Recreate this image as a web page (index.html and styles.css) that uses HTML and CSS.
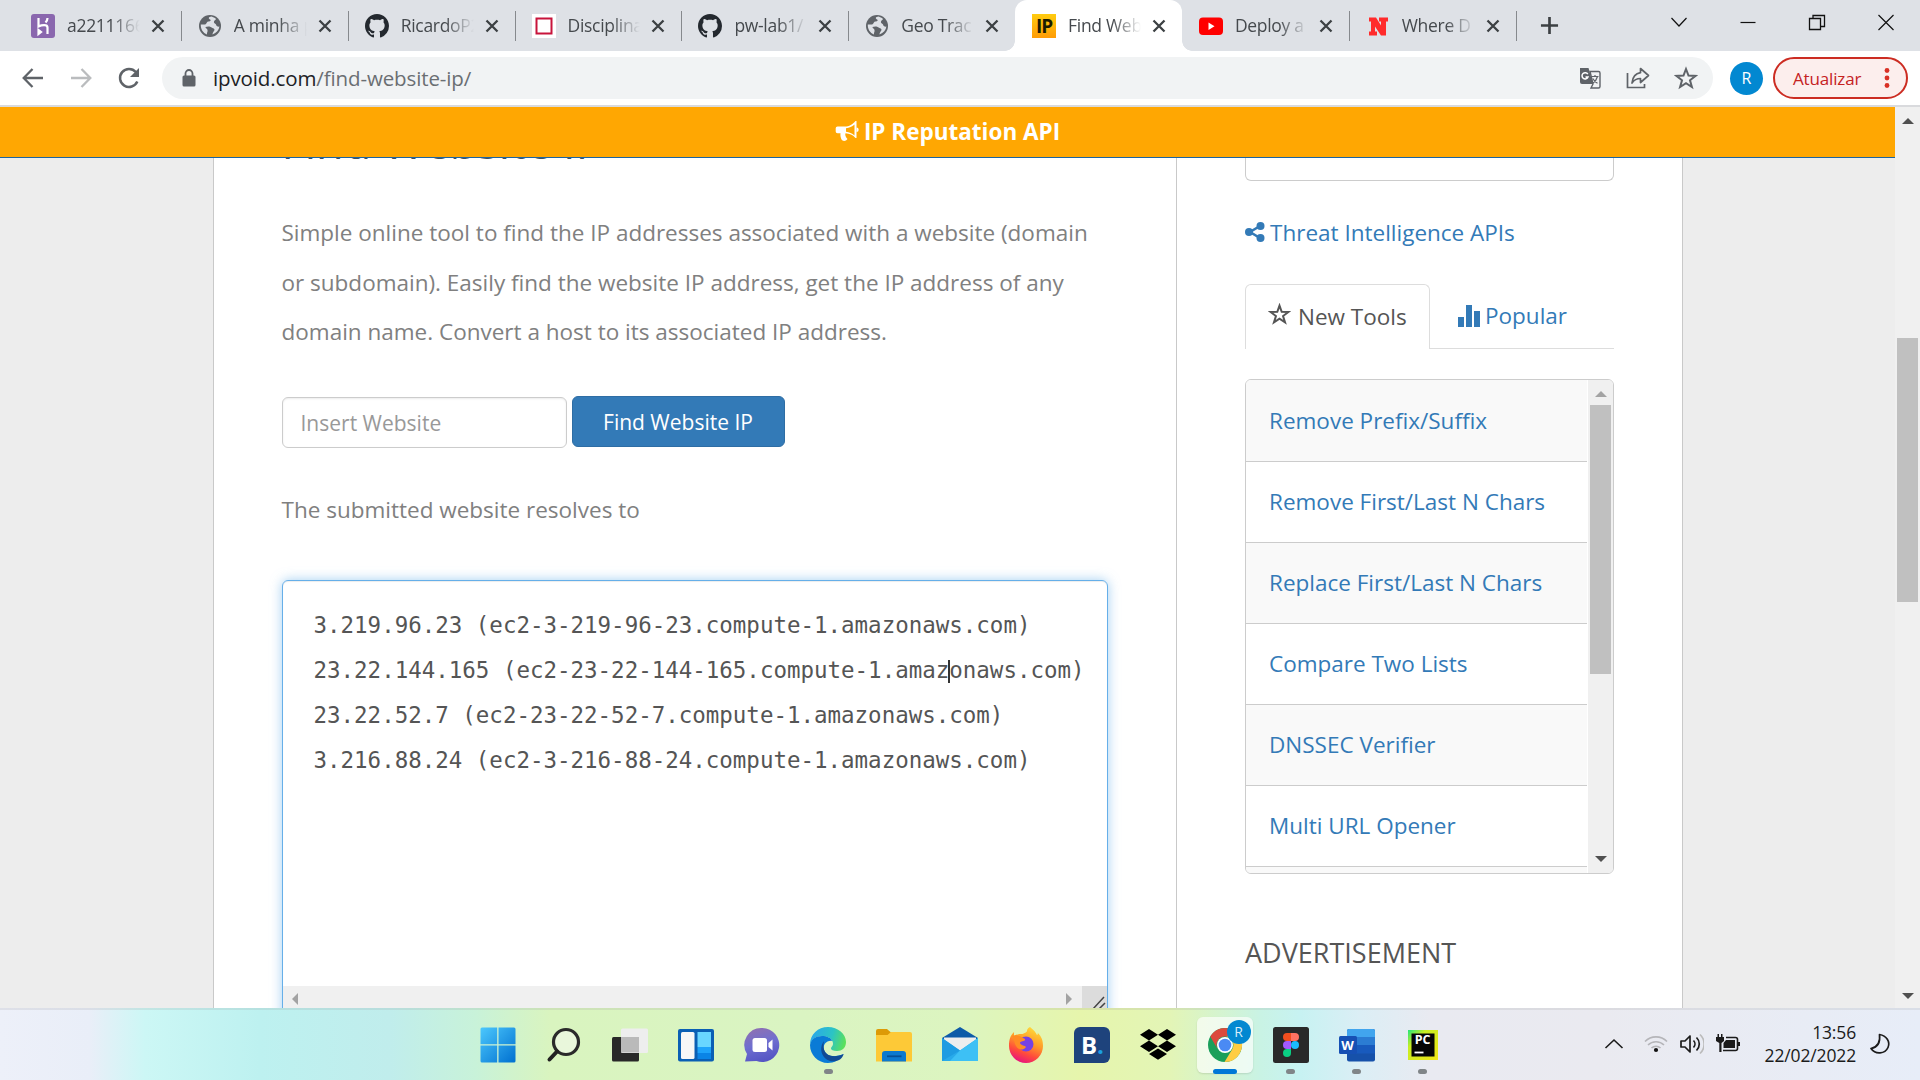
FILE: index.html
```html
<!DOCTYPE html>
<html lang="pt">
<head>
<meta charset="utf-8">
<title>Find Website IP</title>
<link rel="stylesheet" href="styles.css">
</head>
<body>
<svg width="0" height="0" class="defs">
  <defs>
    <symbol id="x" viewBox="0 0 14 14"><path d="M1.5 1.5l11 11M12.500 1.500l-11 11" stroke="#3c4043" stroke-width="2.300" fill="none"/></symbol>
    <symbol id="globe" viewBox="0 0 24 24"><circle cx="12" cy="12" r="11" fill="#5f6368"/><path d="M13.500 2.600c-3 .4-3.500 1.800-1.500 2.900 1.500.8.300 2-1.500 2-2 0-1.500 2.500-3.500 3H2.800C2.600 15 5 19 9 20.500c-.5-2 1-2.500.5-4.500-.3-1.500-2-1.500-2-3 2.500-1 5.500-.5 7 1 2 .5 2.500 1.500 1.500 3-.8 1.200-1.500 2-1.500 3.500C18.500 19 21 16 21.400 12.500c-1.400.5-3.400-.5-3.400-2 0-1-2.500-1-2-3 .3-1.500 1.500-1 2-2.500-1.200-1.200-3-2-4.500-2.400z" fill="#dee1e6"/></symbol>
    <symbol id="github" viewBox="0 0 16 16"><path fill="#24292f" d="M8 0C3.580 0 0 3.580 0 8c0 3.540 2.290 6.530 5.470 7.590.4.070.550-.170.550-.380 0-.190-.010-.820-.010-1.490-2.010.370-2.530-.490-2.690-.940-.090-.230-.480-.940-.820-1.130-.280-.150-.680-.520-.010-.530.630-.010 1.080.580 1.230.820.720 1.210 1.870.870 2.330.660.070-.520.280-.870.510-1.070-1.780-.200-3.640-.890-3.640-3.950 0-.870.310-1.590.820-2.150-.080-.200-.360-1.020.080-2.120 0 0 .670-.210 2.200.820.640-.180 1.320-.270 2-.270s1.360.090 2 .270c1.530-1.040 2.200-.820 2.200-.820.440 1.100.160 1.920.080 2.120.510.560.820 1.270.820 2.150 0 3.070-1.870 3.750-3.650 3.950.290.250.540.730.540 1.480 0 1.070-.010 1.930-.010 2.200 0 .210.150.460.550.380A8 8 0 0 0 16 8c0-4.420-3.580-8-8-8z"/></symbol>
  </defs>
</svg>

<header class="tabstrip">
  <div class="tab"><svg class="fav" viewBox="0 0 24 24"><rect width="24" height="24" rx="3" fill="#8a67ae"/><path d="M7.500 4v8.500c3-1.500 9-2.500 9 1V20M7.500 16v4l2.500-2zM16.500 4c0 2-.8 3.300-2 4.500" stroke="#fff" stroke-width="2.200" fill="none"/></svg><span class="label">a22111664</span><svg class="close"><use href="#x"/></svg></div>
  <div class="tab"><svg class="fav"><use href="#globe"/></svg><span class="label">A minha p</span><svg class="close"><use href="#x"/></svg></div>
  <div class="tab"><svg class="fav"><use href="#github"/></svg><span class="label">RicardoP2</span><svg class="close"><use href="#x"/></svg></div>
  <div class="tab"><svg class="fav" viewBox="0 0 24 24"><rect width="24" height="24" fill="#fff"/><rect x="4.500" y="4.500" width="15" height="15" fill="none" stroke="#c8143c" stroke-width="2"/></svg><span class="label">Disciplina</span><svg class="close"><use href="#x"/></svg></div>
  <div class="tab"><svg class="fav"><use href="#github"/></svg><span class="label">pw-lab1/</span><svg class="close"><use href="#x"/></svg></div>
  <div class="tab nosep"><svg class="fav"><use href="#globe"/></svg><span class="label">Geo Trac</span><svg class="close"><use href="#x"/></svg></div>
  <div class="tab active"><span class="fav ipfav">IP</span><span class="label">Find Web</span><svg class="close"><use href="#x"/></svg></div>
  <div class="tab"><svg class="fav" viewBox="0 0 24 24"><rect y="3.500" width="24" height="17.500" rx="4" fill="#f00"/><path d="M9.500 8.500v7.500l6-3.750z" fill="#fff"/></svg><span class="label">Deploy a</span><svg class="close"><use href="#x"/></svg></div>
  <div class="tab"><svg class="fav" viewBox="0 0 24 24"><path d="M3 3.500h7l5 8V7.500h-2v-4h9v4h-2v14h-5l-6-9v5h2v4H3v-4h2v-10H3z" fill="#ff2b2b"/></svg><span class="label">Where D</span><svg class="close"><use href="#x"/></svg></div>
  <svg class="plus" viewBox="0 0 20 20"><path d="M10 1v18M1 10h18" stroke="#3c4043" stroke-width="2.800"/></svg>
  <div class="winctl">
    <svg viewBox="0 0 20 20"><path d="M2.500 6l7.500 8 7.500-8" fill="none" stroke="#111" stroke-width="1.200"/></svg>
    <svg viewBox="0 0 20 20"><path d="M2.500 10.500h15" stroke="#111" stroke-width="1.200"/></svg>
    <svg viewBox="0 0 20 20"><path d="M2.500 6.500h11v11h-11zM6 6V3.500h11.500v11H14" fill="none" stroke="#111" stroke-width="1.300"/></svg>
    <svg viewBox="0 0 20 20"><path d="M2.500 3l15 15M17.500 3l-15 15" stroke="#111" stroke-width="1.200"/></svg>
  </div>
</header>

<div class="toolbar">
  <svg class="nav" viewBox="0 0 24 24"><path d="M22 12H3M11.500 3L2.700 12l8.800 9" fill="none" stroke="#5f6368" stroke-width="2.300"/></svg>
  <svg class="nav" viewBox="0 0 24 24"><path d="M2 12h19M12.500 3l8.800 9-8.800 9" fill="none" stroke="#babcbe" stroke-width="2.300"/></svg>
  <svg class="nav" viewBox="0 0 24 24"><path d="M20.300 15.500A9 9 0 1 1 18.800 6" fill="none" stroke="#5f6368" stroke-width="2.500"/><path d="M22 2v9h-9z" fill="#5f6368"/></svg>
  <div class="omnibox">
    <svg class="lock" viewBox="0 0 14 18"><rect x=".5" y="6.500" width="13" height="11" rx="1.500" fill="#5f6368"/><path d="M3.500 7V4.500a3.500 3.500 0 0 1 7 0V7" fill="none" stroke="#5f6368" stroke-width="1.800"/></svg>
    <span class="url">ipvoid.com<i>/find-website-ip/</i></span>
    <svg class="act" viewBox="0 0 24 24"><path d="M2 2h8.500l4.500 16H4a2 2 0 0 1-2-2z" fill="#5f6368"/><path d="M12 5.500h8.500a1.500 1.500 0 0 1 1.500 1.500v13.500a1.500 1.500 0 0 1-1.500 1.500H13l2-4z" fill="none" stroke="#5f6368" stroke-width="1.400"/><path d="M9.800 8.200A3.100 3.100 0 1 0 10 11H7.500" fill="none" stroke="#fff" stroke-width="1.500"/><path d="M13.500 10.500h7M17 9v1.500M19.500 10.500c-.8 3-2.500 5-4.500 6.500M14.800 12.500c1 2 2.700 3.700 4.700 4.700" fill="none" stroke="#5f6368" stroke-width="1.200"/></svg>
    <svg class="act" viewBox="0 0 24 24"><path d="M1.500 7v14.500h17V18" fill="none" stroke="#5f6368" stroke-width="1.700"/><path d="M14.500 2.500l8 7-8 7v-4c-4 0-6.500 1.500-8.500 4.500.5-5.500 3.500-9.500 8.500-10.300z" fill="none" stroke="#5f6368" stroke-width="1.700" stroke-linejoin="round"/></svg>
    <svg class="act" viewBox="0 0 24 24"><path d="M12 3l2.500 6.500 7 .4-5.500 4.400 1.900 6.700L12 17.200 6.100 21 8 14.300 2.500 9.900l7-.4z" fill="none" stroke="#5f6368" stroke-width="2"/></svg>
  </div>
  <span class="avatar">R</span>
  <div class="update"><span>Atualizar</span><svg viewBox="0 0 6 22"><g fill="#d93025"><circle cx="3" cy="3.500" r="2.400"/><circle cx="3" cy="11" r="2.400"/><circle cx="3" cy="18.500" r="2.400"/></g></svg></div>
</div>

<main class="viewport">
  <div class="site">
    <div class="promo"><svg viewBox="0 0 24 24"><path fill-rule="evenodd" d="M2 7.500h7c5 0 8-2 11-5.500h1v17h-1c-3-3.500-6-4.500-10-4.800-.8 2.300.5 4 2 5.800-1.500 2.500-5 2.500-6 .5-1-2.800-1.300-4-1-6.300H2a1.800 1.800 0 0 1-1.800-1.800V9.300A1.800 1.800 0 0 1 2 7.500zM10.500 9.200v3.600c3.500.3 6 1.500 8.500 3.700V5.500c-2.500 2.200-5 3.400-8.500 3.700z" fill="#fff"/><path d="M21 8.500a2.200 2.200 0 0 1 0 4.400z" fill="#fff"/></svg>IP Reputation API</div>
    <div class="container">
      <section class="content">
        <h1>Find Website IP</h1>
        <p class="intro">Simple online tool to find the IP addresses associated with a website (domain<br>or subdomain). Easily find the website IP address, get the IP address of any<br>domain name. Convert a host to its associated IP address.</p>
        <div class="form"><div class="input">Insert Website</div><div class="button">Find Website IP</div></div>
        <p class="resolves">The submitted website resolves to</p>
        <div class="result">
          <div class="lines">3.219.96.23 (ec2-3-219-96-23.compute-1.amazonaws.com)
23.22.144.165 (ec2-23-22-144-165.compute-1.amazonaws.com)
23.22.52.7 (ec2-23-22-52-7.compute-1.amazonaws.com)
3.216.88.24 (ec2-3-216-88-24.compute-1.amazonaws.com)<span class="caret"></span></div>
          <div class="hscroll"><svg viewBox="0 0 8 12"><path d="M7 0v12L1 6z" fill="#a3a3a3"/></svg><svg viewBox="0 0 8 12"><path d="M1 0v12l6-6z" fill="#a3a3a3"/></svg><span class="grip"><svg viewBox="0 0 24 22"><path d="M11 23L22 11M17 23l6-6" stroke="#444" stroke-width="1.500"/></svg></span></div>
        </div>
      </section>
      <aside class="sidebar">
        <div class="prevbox"></div>
        <a class="threat"><svg viewBox="0 0 20 20"><path d="M15 4L5 10l10 6" fill="none" stroke="#337ab7" stroke-width="2.600"/><g fill="#337ab7"><circle cx="15.500" cy="4" r="4"/><circle cx="4" cy="10" r="4"/><circle cx="15.500" cy="16" r="4"/></g></svg>Threat Intelligence APIs</a>
        <div class="pills"><div class="pill on"><svg viewBox="0 0 22 22"><path d="M11 2.500l2.100 6 6.400.1-5.100 3.900 1.900 6.100L11 15l-5.300 3.600 1.900-6.100L2.500 8.600l6.400-.1z" fill="none" stroke="#555" stroke-width="1.900"/></svg>New Tools</div><div class="pill"><svg viewBox="0 0 22 22"><path d="M0 12h6v10H0zM8 0h6v22H8zM16 6h6v16h-6z" fill="#337ab7"/></svg>Popular</div></div>
        <div class="listbox">
          <div class="rows"><div>Remove Prefix/Suffix</div><div>Remove First/Last N Chars</div><div>Replace First/Last N Chars</div><div>Compare Two Lists</div><div>DNSSEC Verifier</div><div>Multi URL Opener</div><div></div></div>
          <div class="vscroll inner"><svg viewBox="0 0 12 7"><path d="M0 7h12L6 1z" fill="#a3a3a3"/></svg><span class="thumb"></span><svg viewBox="0 0 12 7"><path d="M0 0h12L6 6z" fill="#505050"/></svg></div>
        </div>
        <h4>ADVERTISEMENT</h4>
      </aside>
    </div>
  </div>
  <div class="vscroll outer"><svg viewBox="0 0 12 7"><path d="M0 7h12L6 1z" fill="#505050"/></svg><span class="thumb"></span><svg viewBox="0 0 12 7"><path d="M0 0h12L6 6z" fill="#505050"/></svg></div>
</main>

<footer class="taskbar">
  <div class="apps">
    <div class="app"><svg viewBox="0 0 36 36"><defs><linearGradient id="wg" x1="0" y1="0" x2="1" y2="1"><stop offset="0" stop-color="#4cc8fd"/><stop offset="1" stop-color="#0070d0"/></linearGradient></defs><path d="M2 .5h15.200v16.700H.5V2A1.500 1.500 0 0 1 2 .5zM18.500.5H34A1.500 1.500 0 0 1 35.500 2v15.200h-17zM.5 18.500h16.700v17H2A1.500 1.500 0 0 1 .5 34zM18.500 18.500h17V34a1.500 1.500 0 0 1-1.500 1.500H18.500z" fill="url(#wg)"/></svg></div>
    <div class="app"><svg viewBox="0 0 36 36"><circle cx="20" cy="15" r="12.500" fill="#f3f8ee" fill-opacity=".6" stroke="#2a2a2a" stroke-width="3.200"/><path d="M11 24.500L3.500 32.500" stroke="#222" stroke-width="4" stroke-linecap="round"/></svg></div>
    <div class="app"><svg viewBox="0 0 36 36"><rect y="10" width="27" height="24.500" rx="1.500" fill="#282828"/><rect x="9" y="1.500" width="27" height="24.500" rx="1.500" fill="#eee"/><path d="M9 10h18v15.500H9z" fill="#bababa"/></svg></div>
    <div class="app"><svg viewBox="0 0 36 36"><rect y="2" width="36" height="32.500" rx="2" fill="#0a5fb4"/><rect x="3" y="5" width="13.500" height="27" rx="1.500" fill="#f7f7f7"/><path d="M19.500 5H33v15H19.500z" fill="#69d6ff"/><path d="M19.500 20H33v6H19.500z" fill="#1ea3fa"/><path d="M19.500 26H33v6H19.500z" fill="#0a84e6"/></svg></div>
    <div class="app"><svg viewBox="0 0 36 36"><defs><linearGradient id="cg" x1=".2" y1="0" x2=".5" y2="1"><stop offset="0" stop-color="#9070b0"/><stop offset=".5" stop-color="#6f6fd0"/><stop offset="1" stop-color="#5555c4"/></linearGradient></defs><path d="M18.500 1a17 17 0 1 1-6 33L1 34.500l2-7.500A17 17 0 0 1 18.500 1z" fill="url(#cg)"/><rect x="8.500" y="11" width="14.500" height="14" rx="2.500" fill="#fff"/><path d="M24.500 16l4-3.500v11l-4-3.500z" fill="#fff"/></svg></div>
    <div class="app run"><svg viewBox="0 0 36 36"><defs><linearGradient id="eg" x1="0" y1=".3" x2="1" y2=".5"><stop offset="0" stop-color="#2aa6ec"/><stop offset=".6" stop-color="#2cc4c4"/><stop offset="1" stop-color="#5be05a"/></linearGradient></defs><path d="M0 18C0 7 8 0 18 0s18 7 18 15c0 6-4 9-9 9-4 0-6-1-6-2.500s2-2 2-5C23 12 18 9 12 9 5 9 1 13 0 18z" fill="url(#eg)"/><path d="M0 18C1 12 6 9 12 9c5 0 9 2 10.500 5-6-1-10 4-8.500 9 2 6 9 8 19.500 4C30 33 24 36 18 36 8 36 0 28 0 18z" fill="#0a7bd6"/><path d="M14 14c-4 5-4 13 2 18 4 3 10 3 14 .5 2-1.500 3-3.500 3.700-5.500-9 4-17 2.500-19.500-4-1-3-.8-6-.2-9z" fill="#114a94"/></svg></div>
    <div class="app"><svg viewBox="0 0 36 36"><path d="M0 4a2 2 0 0 1 2-2h9l4 3.500V9H0z" fill="#dd9a06"/><path d="M0 8h11.500l3.500-3h19a2 2 0 0 1 2 2v27.500H0z" fill="#fdc937"/><path d="M6 34.500V27a3 3 0 0 1 3-3h18a3 3 0 0 1 3 3v7.500z" fill="#0d79cf"/><path d="M11 29.300h14.500" stroke="#074f96" stroke-width="1.800"/></svg></div>
    <div class="app"><svg viewBox="0 0 36 36"><path d="M0 11L18 0l18 11v10H0z" fill="#0d5ba8"/><path d="M2 10.500h32v14H2z" fill="#eee"/><path d="M0 11l18 12.500L36 11v23H0z" fill="#28aaea"/><path d="M18 23.500L36 11v23H8z" fill="#3dc0f5"/><path d="M0 11l18 12.500L0 34z" fill="#1e9ce2"/></svg></div>
    <div class="app"><svg viewBox="0 0 36 36"><defs><linearGradient id="fg" x1=".8" y1="0" x2=".4" y2="1"><stop offset="0" stop-color="#ffe03a"/><stop offset=".45" stop-color="#ff9a28"/><stop offset=".75" stop-color="#ff4a3c"/><stop offset="1" stop-color="#e8167c"/></linearGradient></defs><path d="M22 0c5 4 6 6 7 8 1-.5 1-1.500.5-2.500C34 10 35 14 35 19a17 17 0 0 1-34 0C1 13 2 9 6 5v4c3-2 6-2 8-2 1 0 5-2 5-3 0-2 1-3 3-4z" fill="url(#fg)"/><circle cx="18" cy="17" r="7.500" fill="#7542e5"/><path d="M4 9c5-2 9 1 13 3 1 3-5 2-5 4 1 3 5 2 6 4-3 4-8 3-10-1-2-3-1-6-4-10z" fill="#ff8c24"/></svg></div>
    <div class="app"><span class="booking">B<i>.</i></span></div>
    <div class="app"><svg viewBox="0 0 36 36"><path d="M9 2l9 5.800-9 5.700-9-5.700zM27 2l9 5.800-9 5.700-9-5.700zM9 13.500l9 5.700-9 5.800-9-5.800zM27 13.500l9 5.700-9 5.800-9-5.800zM18 21.500l9 5.500-9 5.800L9 27z" fill="#000"/></svg></div>
    <div class="app current"><svg viewBox="0 0 36 36"><circle cx="18" cy="18" r="17" fill="#1a9f5a"/><path d="M3.300 9.500A17 17 0 0 1 32.700 9.500H18A8.500 8.500 0 0 0 10.500 22z" fill="#dc4a3d"/><path d="M32.700 9.500A17 17 0 0 1 17.500 35L25.400 22A8.500 8.500 0 0 0 18 9.500z" fill="#ffcd42"/><circle cx="18" cy="18" r="8" fill="#fff"/><circle cx="18" cy="18" r="6.300" fill="#4a8af4"/></svg><span class="badge">R</span></div>
    <div class="app run"><svg viewBox="0 0 36 36"><rect width="36" height="36" rx="2.500" fill="#292929"/><path d="M14 6h4v8h-4a4 4 0 0 1 0-8z" fill="#f24e1e"/><path d="M18 6h4a4 4 0 0 1 0 8h-4z" fill="#ff7262"/><path d="M14 14h4v8h-4a4 4 0 0 1 0-8z" fill="#a259ff"/><circle cx="22" cy="18" r="4" fill="#1abcfe"/><path d="M14 22h4v4a4 4 0 1 1-4-4z" fill="#0acf83"/></svg></div>
    <div class="app run"><svg viewBox="0 0 36 36"><rect x="8" y="2" width="28" height="32.500" rx="2" fill="#1651aa"/><path d="M8 4a2 2 0 0 1 2-2h24a2 2 0 0 1 2 2v6H8z" fill="#41a5ee"/><path d="M8 10h28v8H8z" fill="#2b7cd3"/><path d="M8 18h28v8.500H8z" fill="#185abd"/><rect y="9" width="18" height="18" rx="1.500" fill="#1650b4"/></svg><span class="word">W</span></div>
    <div class="app run"><svg viewBox="0 0 36 36"><defs><linearGradient id="pg" x1="0" y1="0" x2="1" y2="1"><stop offset="0" stop-color="#21e67b"/><stop offset=".3" stop-color="#c8ee22"/><stop offset="1" stop-color="#f2e717"/></linearGradient></defs><rect x="3" y="3" width="30" height="30" fill="url(#pg)"/><rect x="6.500" y="6.500" width="23" height="23" fill="#060606"/><path d="M9.500 25.500h9" stroke="#fff" stroke-width="1.800"/></svg><span class="pc">PC</span></div>
  </div>
  <div class="tray">
    <svg class="t1" viewBox="0 0 24 24"><path d="M3.500 16L12 8l8.500 8" fill="none" stroke="#1b1b1b" stroke-width="1.600"/></svg>
    <svg class="t2" viewBox="0 0 24 24"><g fill="none" stroke="#b5b5b9" stroke-width="1.600"><path d="M1 9.500a15.500 15.500 0 0 1 22 0M4 13a11.300 11.300 0 0 1 16 0M7.500 16a6.500 6.500 0 0 1 9 0"/></g><circle cx="12" cy="18" r="2.100" fill="#111"/></svg>
    <svg class="t3" viewBox="0 0 24 24"><g fill="none" stroke-width="1.700" stroke-linejoin="round"><path d="M1 9h4l5-5v16l-5-5H1zM13.500 8.500a5 5 0 0 1 0 7M16.500 5.500a9 9 0 0 1 0 13" stroke="#1b1b1b"/><path d="M20 2.500a13 13 0 0 1 0 19" stroke="#bbb"/></g></svg>
    <svg class="t4" viewBox="0 0 24 24"><path d="M0 5h1.500V2H3v3h2V2h1.500v3H8v4L5.500 11v9H3.300v-9L0 9z" fill="#1b1b1b"/><path d="M10 5.500h9.500a2 2 0 0 1 2 2v9a2 2 0 0 1-2 2H7" fill="none" stroke="#1b1b1b" stroke-width="1.600"/><path d="M10 8h9v8H7.500v-5zM22 10h2v4h-2z" fill="#1b1b1b"/></svg>
    <div class="clock"><span>13:56</span><span>22/02/2022</span></div>
    <svg class="t5" viewBox="0 0 24 24"><path d="M11.500 2.500c7 1 11 7.500 8.500 13-3 6.500-12.500 7.500-17 1 7-1.500 9.500-6.500 8.500-14z" fill="none" stroke="#1b1b1b" stroke-width="1.700" stroke-linejoin="round"/></svg>
  </div>
</footer>
</body>
</html>
```
FILE: styles.css
```css
* { box-sizing: border-box; }
body { margin: 0; width: 1920px; height: 1080px; overflow: hidden; display: flex; flex-direction: column; font-family: "Open Sans", sans-serif; background: #fff; }
svg { display: block; flex: none; }
i { font-style: normal; }
.defs { position: absolute; }

.tabstrip { height: 51px; flex: none; background: #dee1e6; display: flex; padding-left: 14px; align-items: stretch; }
.tab { width: 166.850px; flex: none; display: flex; align-items: center; padding: 0 16px 0 17px; position: relative; }
.tab::after { content: ""; position: absolute; right: -1px; top: 11px; width: 1px; height: 30px; background: #86898d; }
.tab.nosep::after, .tab.active::after { display: none; }
.tab.active { background: #fff; border-radius: 12px 12px 0 0; }
.tab.active::before { content: ""; position: absolute; left: -10px; right: -10px; bottom: 0; height: 10px; background: radial-gradient(circle at 0 0, transparent 9.500px, #fff 10px) left / 10px 10px no-repeat, radial-gradient(circle at 100% 0, transparent 9.500px, #fff 10px) right / 10px 10px no-repeat; }
.fav { width: 24px; height: 24px; flex: none; }
.ipfav { background: linear-gradient(#ffcc10, #ff9c06); color: #1a1a00; font: bold 19px/24px "Open Sans", sans-serif; text-align: center; letter-spacing: -1px; }
.label { width: 74px; margin: -1px 11px 0 12px; font-size: 17.500px; letter-spacing: -.3px; color: #45494d; white-space: nowrap; overflow: hidden; -webkit-mask-image: linear-gradient(90deg, #000 60%, transparent 100%); mask-image: linear-gradient(90deg, #000 60%, transparent 100%); }
.close { width: 14px; height: 14px; }
.plus { width: 19px; height: 19px; margin: 16px 0 0 24px; }
.winctl { margin-left: auto; padding: 12px 24px 0 0; display: flex; gap: 49px; }
.winctl svg { width: 20px; height: 20px; }

.toolbar { height: 56px; flex: none; display: flex; align-items: center; padding: 0 12px 0 21px; border-bottom: 2px solid #d9dadd; }
.nav { width: 24px; height: 24px; margin-right: 24px; }
.omnibox { width: 1551px; height: 42px; border-radius: 21px; background: #f1f3f4; display: flex; align-items: center; padding: 0 15px 0 20px; margin-left: -3px; }
.lock { width: 14px; height: 18px; }
.url { flex: 1; margin-left: 17px; font-size: 20.500px; line-height: 28px; letter-spacing: -.12px; color: #202124; }
.url i { color: #6a6e72; }
.act { width: 24px; height: 24px; margin-left: 24px; }
.avatar { width: 33px; height: 33px; border-radius: 50%; background: #0288d1; color: #fff; font-size: 16px; line-height: 33px; text-align: center; margin-left: 17px; }
.update { width: 135px; height: 42px; margin-left: 10px; border: 2px solid #cc2c22; border-radius: 21px; background: #fceeed; color: #c5221f; display: flex; align-items: center; justify-content: space-between; padding: 0 16px 0 18px; font-size: 17px; letter-spacing: -.15px; }
.update svg { width: 6px; height: 22px; }

.viewport { height: 901px; flex: none; display: flex; overflow: hidden; }
.site { width: 1895px; background: #ededed; display: flex; flex-direction: column; }
.promo { height: 51px; flex: none; background: #ffa702; border-bottom: 1px solid #1d64a0; display: flex; justify-content: center; align-items: center; gap: 4px; padding-bottom: 2px; color: #fff; font-weight: 700; font-size: 22.500px; }
.promo svg { width: 25px; height: 24px; }
.container { width: 1470px; height: 850px; margin-left: 213px; background: #fff; border: solid #c9c9c9; border-width: 0 1px; display: flex; overflow: hidden; }
.content { width: 963px; border-right: 1px solid #c9c9c9; padding-left: 67.500px; }
h1 { margin: -41px 0 0; height: 50px; font-size: 45px; line-height: 50px; color: #3f5060; font-weight: 400; white-space: nowrap; }
.intro, .resolves { margin: 0; font-size: 22.500px; line-height: 49.500px; color: #808080; white-space: nowrap; }
.intro { margin-top: 41px; }
.form { display: flex; gap: 5px; margin-top: 39px; }
.input { width: 285px; height: 51px; margin-top: 1px; border: 1px solid #ccc; border-radius: 6px; box-shadow: inset 0 1px 2px rgba(0,0,0,.08); padding-left: 18px; font-size: 21px; line-height: 50px; color: #999; }
.button { width: 213px; height: 51px; border: 1px solid #2e6da4; border-radius: 6px; background: #337ab7; color: #fff; text-align: center; font-size: 21px; line-height: 50px; }
.resolves { margin-top: 37px; }
.result { width: 826px; height: 470px; margin-top: 46px; border: 1px solid #66afe9; border-radius: 6px; box-shadow: inset 0 1px 1px rgba(0,0,0,.075), 0 0 12px rgba(102,175,233,.6); display: flex; flex-direction: column; }
.lines { position: relative; height: 405px; flex: none; padding: 22px 0 0 31px; font: 22.480px/45px "DejaVu Sans Mono", monospace; color: #555; white-space: pre; }
.caret { position: absolute; left: calc(30px + 47ch); top: 79px; width: 2px; height: 23px; background: #333; }
.hscroll { height: 25px; background: #f0f0f0; display: flex; align-items: center; justify-content: space-between; padding-left: 8px; }
.hscroll > svg { width: 8px; height: 12px; }
.hscroll > svg:nth-child(2) { margin-left: auto; margin-right: 9px; }
.grip { width: 25px; height: 25px; background: #dcdcdc; }
.grip svg { width: 24px; height: 22px; }

.sidebar { width: 369px; margin-left: 68px; flex: none; color: #337ab7; font-size: 22.500px; }
.prevbox { height: 23px; border: 1px solid #ccc; border-top: 0; border-radius: 0 0 6px 6px; }
.threat { display: flex; align-items: center; gap: 5px; height: 34px; margin-top: 34px; }
.threat svg { width: 20px; height: 20px; }
.pills { display: flex; height: 65px; margin-top: 35px; border-bottom: 1px solid #ddd; }
.pill { display: flex; align-items: center; gap: 5px; height: 65px; padding: 0 0 2px 28px; }
.pill svg { width: 22px; height: 22px; }
.pill.on { width: 185px; padding-left: 22px; gap: 7px; background: #fff; border: 1px solid #ddd; border-bottom: 0; border-radius: 6px 6px 0 0; color: #555; }
.pill.on svg { width: 23px; height: 23px; margin-top: -4px; }
.listbox { height: 495px; margin-top: 30px; border: 1px solid #ccc; border-radius: 6px; display: flex; overflow: hidden; }
.rows { width: 341px; }
.rows div { height: 81px; padding: 0 0 1px 23px; line-height: 79px; border-bottom: 1px solid #ccc; }
.rows div:first-child { height: 82px; line-height: 81px; }
.rows div:nth-child(odd) { background: #f9f9f9; }
h4 { margin: 59px 0 0; font-size: 27px; line-height: 40px; font-weight: 400; color: #555; }

.vscroll { display: flex; flex-direction: column; align-items: center; background: #f0f0f0; }
.vscroll > svg { width: 12px; height: 7px; }
.vscroll .thumb { background: #c0c0c0; width: 21px; }
.inner { width: 25px; margin-left: 1px; padding: 10px 0 10px; }
.inner .thumb { margin: 8px 0 auto; height: 269px; }
.outer { width: 25px; padding: 10px 0 8px; }
.outer .thumb { margin: 214px 0 auto; height: 264px; }

.taskbar { height: 72px; flex: none; display: flex; border-top: 2px solid rgba(140,140,140,.16); padding-left: 465px; background: linear-gradient(90deg, #edf0f9 0, #e9eef8 90px, #ccf7f5 145px, #bdf1f0 260px, #c0edec 390px, #c8f2d9 475px, #d9f4bf 550px, #daf4c2 800px, #dcf5c0 960px, #e6f5ac 1080px, #e3f5b6 1170px, #c9f3e4 1260px, #c7f2f2 1300px, #dbeef5 1360px, #e9eaf1 1430px, #eaeaf0 1600px, #e7edf8 1920px) border-box; }
.apps { display: flex; }
.app { width: 66.050px; height: 70px; padding-top: 17px; display: flex; justify-content: center; position: relative; }
.app > svg { width: 36px; height: 36px; }
.run::after, .current::after { content: ""; position: absolute; left: 28.500px; top: 59px; width: 9px; height: 5px; border-radius: 3px; background: #808588; }
.current::before { content: ""; position: absolute; left: 5px; top: 7px; width: 56px; height: 56px; border-radius: 6px; background: rgba(255,255,255,.65); box-shadow: 0 1px 2px rgba(0,0,0,.12); }
.current > svg { position: relative; }
.current::after { left: 21px; width: 24px; background: #0078d7; }
.badge { position: absolute; left: 35px; top: 10px; width: 24px; height: 24px; border-radius: 50%; background: #0288d1; color: #d8eefa; font-size: 14px; line-height: 24px; text-align: center; }
.booking { width: 36px; height: 36px; border-radius: 6px 6px 6px 0; background: #1e437c; color: #fff; font: bold 24px/35px "Open Sans", sans-serif; text-align: center; }
.booking i { color: #1ba0e2; }
.word { position: absolute; left: 15px; top: 26px; width: 18px; color: #fff; font: bold 13px/18px "Open Sans", sans-serif; text-align: center; }
.pc { position: absolute; left: 23px; top: 22px; width: 20px; color: #fff; font: bold 12.500px/16px "Open Sans", sans-serif; text-align: center; }
.tray { display: flex; padding-top: 22px; margin-left: auto; width: 318px; }
.tray svg { width: 24px; height: 24px; }
.t1 { margin-right: 18px; }
.t2 { margin-right: 12px; }
.t3 { margin-right: 12px; }
.clock { width: 106px; margin: -11px 12px 0 10px; display: flex; flex-direction: column; align-items: flex-end; font-size: 17.500px; line-height: 23px; letter-spacing: -.15px; color: #1b1b1b; }
```
